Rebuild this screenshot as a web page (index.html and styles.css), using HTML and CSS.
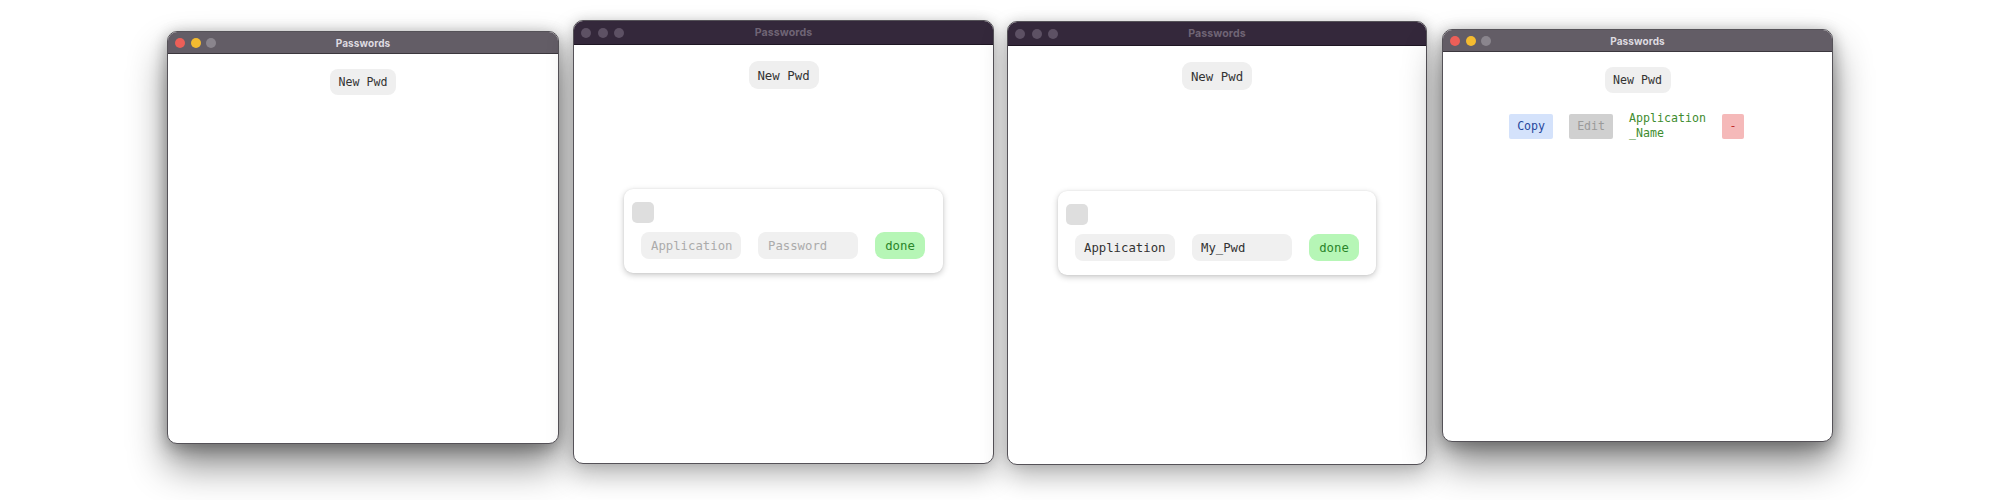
FILE: index.html
```html
<!DOCTYPE html>
<html lang="en">
<head>
<meta charset="utf-8">
<title>Passwords</title>
<link rel="stylesheet" href="styles.css">
</head>
<body>
<div class="desk">

  <section class="win win--active win-1">
    <header class="titlebar">
      <div class="lights"><span class="dot dot--red"></span><span class="dot dot--yellow"></span><span class="dot dot--gray"></span></div>
      <div class="title">Passwords</div>
      <div></div>
    </header>
    <main class="content">
      <button class="btn">New Pwd</button>
    </main>
  </section>

  <section class="win win--inactive win--lg win-2">
    <header class="titlebar">
      <div class="lights"><span class="dot"></span><span class="dot"></span><span class="dot"></span></div>
      <div class="title">Passwords</div>
      <div></div>
    </header>
    <main class="content">
      <button class="btn">New Pwd</button>
      <div class="card">
        <div class="square"></div>
        <div class="fields">
          <div class="field field--placeholder">Application</div>
          <div class="field field--placeholder">Password</div>
          <div class="done">done</div>
        </div>
      </div>
    </main>
  </section>

  <section class="win win--inactive win--lg win-3">
    <header class="titlebar">
      <div class="lights"><span class="dot"></span><span class="dot"></span><span class="dot"></span></div>
      <div class="title">Passwords</div>
      <div></div>
    </header>
    <main class="content">
      <button class="btn">New Pwd</button>
      <div class="card">
        <div class="square"></div>
        <div class="fields">
          <div class="field">Application</div>
          <div class="field">My_Pwd</div>
          <div class="done">done</div>
        </div>
      </div>
    </main>
  </section>

  <section class="win win--active win-4">
    <header class="titlebar">
      <div class="lights"><span class="dot dot--red"></span><span class="dot dot--yellow"></span><span class="dot dot--gray"></span></div>
      <div class="title">Passwords</div>
      <div></div>
    </header>
    <main class="content">
      <button class="btn">New Pwd</button>
      <div class="entry">
        <span class="chip chip--copy">Copy</span>
        <span class="chip chip--edit">Edit</span>
        <span class="entry-name">Application_Name</span>
        <span class="chip chip--del">-</span>
      </div>
    </main>
  </section>

</div>
</body>
</html>
```

FILE: styles.css
```css
* { box-sizing: border-box; }

html, body {
  margin: 0;
  padding: 0;
  background: #ffffff;
}

.desk {
  display: flex;
  align-items: flex-start;
  padding-left: 167px;
  height: 500px;
  overflow: hidden;
}

.win {
  display: flex;
  flex-direction: column;
  background: #ffffff;
  border: 1px solid #555258;
  border-radius: 10px;
  overflow: hidden;
  flex: none;
}

.win--active {
  box-shadow: 0 22px 38px rgba(0, 0, 0, 0.45), 0 6px 18px rgba(0, 0, 0, 0.24), 0 0 14px rgba(0, 0, 0, 0.12);
}

.win--inactive {
  box-shadow: 0 12px 26px rgba(0, 0, 0, 0.28), 0 0 12px rgba(0, 0, 0, 0.14);
}

.win-1 { width: 392px; height: 413px; margin-top: 31px; }
.win-2 { width: 421px; height: 444px; margin-top: 20px; margin-left: 14px; }
.win-3 { width: 420px; height: 444px; margin-top: 21px; margin-left: 13px; }
.win-4 { width: 391px; height: 413px; margin-top: 29px; margin-left: 15px; }

.titlebar {
  display: grid;
  grid-template-columns: 1fr auto 1fr;
  align-items: center;
  height: 22px;
  padding: 0 7px;
  flex: none;
}

.win--active .titlebar {
  background: #635d66;
  border-bottom: 1px solid #3b373d;
}

.win--inactive .titlebar {
  height: 24px;
  background: #34283b;
  border-bottom: 1px solid #1e1623;
}

.lights {
  display: flex;
  gap: 5.5px;
}

.win--lg .lights { gap: 6.5px; }

.dot {
  width: 10px;
  height: 10px;
  border-radius: 50%;
  background: #5d5164;
}

.dot--red { background: #ec5f58; }
.dot--yellow { background: #f4bb30; }
.dot--gray { background: #8a858d; }

.title {
  font-family: "Inter", "Liberation Sans", sans-serif;
  font-weight: 700;
  font-size: 10px;
  letter-spacing: 0.1px;
  color: #dedbe0;
}

.win--inactive .title {
  font-size: 10.6px;
  color: #6f6475;
}

.content {
  flex: 1;
  display: flex;
  flex-direction: column;
  align-items: center;
  padding-top: 15px;
  font-family: "DejaVu Sans Mono", "Liberation Mono", monospace;
}

.win--lg .content { padding-top: 16px; }

.btn {
  font-family: "DejaVu Sans Mono", "Liberation Mono", monospace;
  font-size: 11.6px;
  color: #333333;
  background: #efefef;
  border: none;
  border-radius: 8px;
  width: 66px;
  height: 26px;
  padding: 0;
}

.win--lg .btn {
  font-size: 12.4px;
  width: 70px;
  height: 28px;
  border-radius: 9px;
}

.card {
  margin-top: 100px;
  width: 319px;
  padding: 13px 17px 14px 17px;
  background: #ffffff;
  border-radius: 9px;
  box-shadow: 0 2px 6px rgba(0, 0, 0, 0.22), 0 0 2px rgba(0, 0, 0, 0.08);
}

.win-3 .card { width: 318px; margin-top: 101px; }

.square {
  width: 22px;
  height: 21px;
  margin-left: -9px;
  border-radius: 5px;
  background: #dedede;
}

.fields {
  display: flex;
  gap: 17px;
  margin-top: 9px;
}

.field {
  width: 100px;
  height: 27px;
  padding-left: 9px;
  display: flex;
  align-items: center;
  border-radius: 8px;
  background: #f0f0f0;
  font-size: 12.3px;
  color: #333333;
}

.field--placeholder {
  color: #ababab;
  padding-left: 10px;
}

.done {
  width: 50px;
  height: 27px;
  display: flex;
  align-items: center;
  justify-content: center;
  border-radius: 9px;
  background: #b6f6b6;
  color: #2a852a;
  font-size: 12.3px;
  font-weight: 400;
}

.entry {
  display: flex;
  align-items: center;
  gap: 16px;
  margin-top: 18px;
  padding-right: 22px;
  font-size: 11.6px;
}

.chip {
  height: 25px;
  display: flex;
  align-items: center;
  justify-content: center;
  border-radius: 2px;
}

.chip--copy {
  width: 44px;
  background: #d4e2fb;
  color: #26479c;
}

.chip--edit {
  width: 44px;
  background: #d0d0d0;
  color: #9a9a9a;
}

.chip--del {
  width: 22px;
  background: #f5b9b9;
  color: #c02c2c;
}

.entry-name {
  width: 11ch;
  word-break: break-all;
  line-height: 15px;
  color: #3e8c2e;
}
```
